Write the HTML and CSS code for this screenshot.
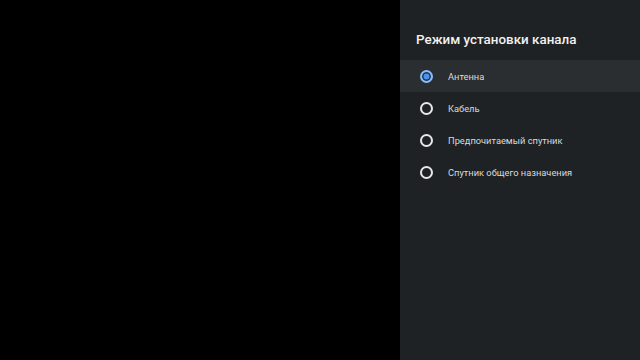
FILE: index.html
```html
<!DOCTYPE html>
<html lang="ru">
<head>
    <meta charset="UTF-8">
    <meta name="viewport" content="width=device-width, initial-scale=1.0">
    <title>Режим установки канала</title>
    <link rel="stylesheet" href="styles.css">
</head>
<body>
    <div class="screen">
        <div class="video"></div>
        <div class="panel">
            <h2 class="panel-title">Режим установки канала</h2>
            <ul class="options">
                <li class="option selected"><span class="radio"></span><span class="label">Антенна</span></li>
                <li class="option"><span class="radio"></span><span class="label">Кабель</span></li>
                <li class="option"><span class="radio"></span><span class="label">Предпочитаемый спутник</span></li>
                <li class="option"><span class="radio"></span><span class="label">Спутник общего назначения</span></li>
            </ul>
        </div>
    </div>
</body>
</html>
```

FILE: styles.css
```css
body {
    margin: 0;
    background: #000;
    font-family: 'Roboto', 'Liberation Sans', sans-serif;
}
.screen {
    display: flex;
    width: 640px;
    height: 360px;
}
.video {
    flex: 1;
    background: #000;
}
.panel {
    width: 240px;
    background: #1f2224;
    box-shadow: -2px 0 4px rgba(0, 0, 0, 0.5);
}
.panel-title {
    margin: 0;
    padding: 31px 16px 0 16px;
    height: 29px;
    color: #f1f1f1;
    font-size: 13.4px;
    font-weight: 500;
    line-height: 18px;
}
.options {
    list-style: none;
    margin: 0;
    padding: 0;
}
.option {
    display: flex;
    align-items: center;
    height: 32px;
    padding-left: 20px;
}
.option.selected {
    background: #2b2e30;
}
.radio {
    width: 9px;
    height: 9px;
    border: 2px solid #e8e8e8;
    border-radius: 50%;
    box-sizing: content-box;
    flex-shrink: 0;
}
.option.selected .radio {
    border-color: #8cbcf5;
    background: #4b94ea;
    box-shadow: inset 0 0 0 1.5px #1f2f45;
}
.label {
    margin-left: 15px;
    color: #d9dadb;
    font-size: 9.3px;
}
```
